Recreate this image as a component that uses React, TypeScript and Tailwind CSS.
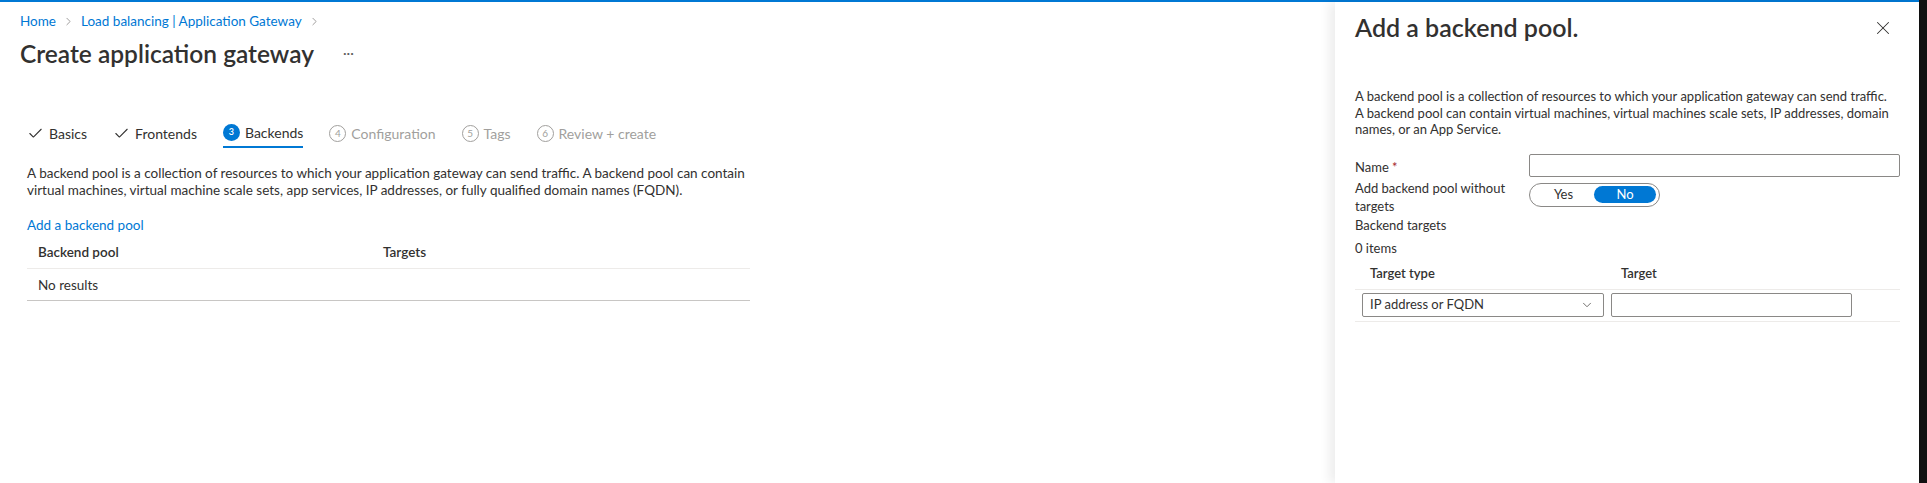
import { Check, ChevronRight, ChevronDown, X } from 'lucide-react';

const font = "font-['Segoe_UI','Lato',sans-serif]";

function StepCircle({ n, active }: { n: number; active?: boolean }) {
  return (
    <span
      className={
        active
          ? 'flex h-[17px] w-[17px] items-center justify-center rounded-full bg-[#0078d4] text-[9px] font-semibold text-white'
          : 'flex h-[17px] w-[17px] items-center justify-center rounded-full border border-[#a19f9d] text-[10px] text-[#a19f9d]'
      }
    >
      {n}
    </span>
  );
}

function Tabs() {
  return (
    <div className="flex items-start gap-[26px] pl-[8px] text-[14px]">
      <div className="flex h-[30px] items-center gap-[5px] text-[#323130]">
        <Check className="h-[17px] w-[17px]" strokeWidth={1.5} />
        <span>Basics</span>
      </div>
      <div className="flex h-[30px] items-center gap-[5px] text-[#323130]">
        <Check className="h-[17px] w-[17px]" strokeWidth={1.5} />
        <span>Frontends</span>
      </div>
      <div className="flex h-[30px] items-center gap-[5px] border-b-2 border-[#0078d4] text-[#323130]">
        <StepCircle n={3} active />
        <span>Backends</span>
      </div>
      <div className="flex h-[30px] items-center gap-[5px] text-[#a19f9d]">
        <StepCircle n={4} />
        <span>Configuration</span>
      </div>
      <div className="flex h-[30px] items-center gap-[5px] text-[#a19f9d]">
        <StepCircle n={5} />
        <span>Tags</span>
      </div>
      <div className="flex h-[30px] items-center gap-[5px] text-[#a19f9d]">
        <StepCircle n={6} />
        <span>Review + create</span>
      </div>
    </div>
  );
}

function MainArea() {
  return (
    <main className="flex-1 pl-[20px] pt-[8px]">
      <nav className="flex h-[22px] items-center text-[13.5px] text-[#0078d4]">
        <span>Home</span>
        <ChevronRight className="mx-[6px] h-[13px] w-[13px] text-[#8a8886]" strokeWidth={1.5} />
        <span>Load balancing | Application Gateway</span>
        <ChevronRight className="mx-[6px] h-[13px] w-[13px] text-[#8a8886]" strokeWidth={1.5} />
      </nav>
      <div className="mt-[4px] flex h-[36px] items-center">
        <h1 className="text-[24.5px] font-semibold text-[#323130]">Create application gateway</h1>
        <span className="ml-[29px] pb-[4px] text-[14px] text-[#605e5c]">···</span>
      </div>
      <div className="pl-[7px] pt-[46px]">
        <div className="-ml-[8px]">
          <Tabs />
        </div>
        <p className="mt-[17px] max-w-[730px] text-[13.5px] leading-[17px] text-[#323130]">
          A backend pool is a collection of resources to which your application gateway can send traffic. A backend pool can contain
          virtual machines, virtual machine scale sets, app services, IP addresses, or fully qualified domain names (FQDN).
        </p>
        <div className="mt-[16px] text-[13.5px] text-[#0078d4]">Add a backend pool</div>
        <div className="mt-[1px] w-[723px] text-[13.5px] text-[#323130]">
          <div className="grid h-[33px] grid-cols-[345px_1fr] items-center border-b border-[#edebe9] px-[11px] font-semibold">
            <span>Backend pool</span>
            <span>Targets</span>
          </div>
          <div className="flex h-[32px] items-center border-b border-[#c8c6c4] px-[11px]">No results</div>
        </div>
      </div>
    </main>
  );
}

function Panel() {
  return (
    <aside className="relative w-[584px] bg-white pl-[20px] pr-[19px] shadow-[-6px_0_10px_rgba(0,0,0,0.07)]">
      <div className="flex h-[52px] items-center justify-between">
        <h2 className="text-[25px] font-semibold text-[#323130]">Add a backend pool.</h2>
        <X className="mr-[6px] h-[22px] w-[22px] text-[#323130]" strokeWidth={1.1} />
      </div>
      <p className="mt-[34px] w-[541px] text-[13px] leading-[16.5px] text-[#323130]">
        A backend pool is a collection of resources to which your application gateway can send traffic. A backend pool can
        contain virtual machines, virtual machines scale sets, IP addresses, domain names, or an App Service.
      </p>
      <div className="mt-[16px] text-[13px] text-[#323130]">
        <div className="flex h-[23px] items-center">
          <label className="w-[174px] pt-[5px]">
            Name <span className="text-[#a4262c]">*</span>
          </label>
          <div className="h-[23px] flex-1 rounded-[2px] border border-[#8a8886]" />
        </div>
        <div className="mt-[2px] flex">
          <label className="w-[174px] leading-[18.5px]">
            Add backend pool without
            <br />
            targets
          </label>
          <div className="mt-[4px] flex h-[24px] w-[131px] items-center rounded-full border border-[#8a8886] p-[3px]">
            <span className="flex-1 text-center">Yes</span>
            <span className="flex h-[17px] w-[62px] items-center justify-center rounded-full bg-[#0078d4] text-white">No</span>
          </div>
        </div>
        <div className="leading-[19px]">Backend targets</div>
        <div className="mt-[4px] leading-[19px]">0 items</div>
        <div className="mt-[2px] w-[545px]">
          <div className="grid h-[30px] grid-cols-[251px_1fr] items-center border-b border-[#edebe9] pl-[15px] font-semibold">
            <span>Target type</span>
            <span>Target</span>
          </div>
          <div className="flex h-[32px] items-center gap-[7px] border-b border-[#edebe9] pl-[7px]">
            <div className="flex h-[24px] w-[242px] items-center justify-between rounded-[2px] border border-[#8a8886] pl-[7px] pr-[9px]">
              <span>IP address or FQDN</span>
              <ChevronDown className="h-[14px] w-[14px] text-[#605e5c]" strokeWidth={1.5} />
            </div>
            <div className="h-[24px] w-[241px] rounded-[2px] border border-[#8a8886]" />
          </div>
        </div>
      </div>
    </aside>
  );
}

export default function App() {
  return (
    <div className={`${font} flex h-[483px] w-[1927px] overflow-hidden bg-white`}>
      <div className="flex flex-1 flex-col">
        <div className="h-[2px] bg-[#0078d4]" />
        <div className="flex flex-1">
          <MainArea />
          <Panel />
        </div>
      </div>
      <div className="w-[8px] bg-[#111111]" />
    </div>
  );
}
